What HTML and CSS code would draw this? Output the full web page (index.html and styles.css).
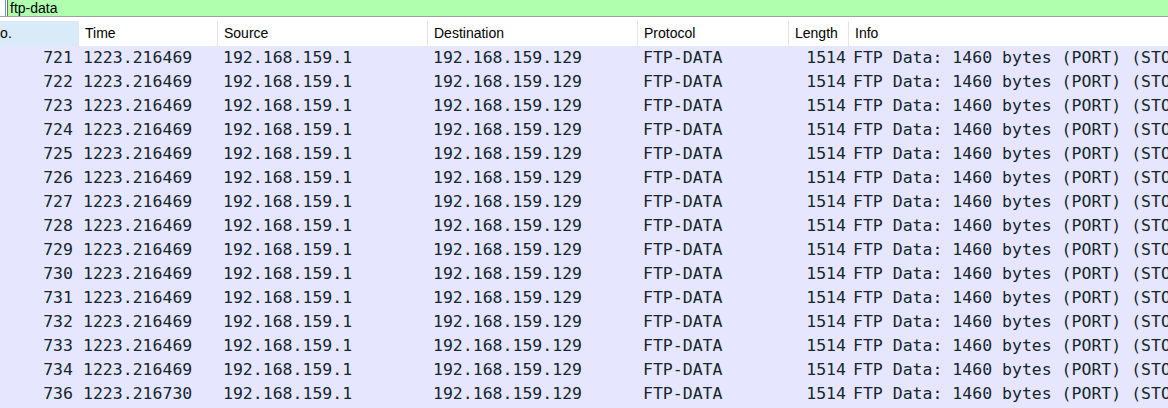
FILE: index.html
```html
<!DOCTYPE html>
<html>
<head>
<meta charset="utf-8">
<link rel="stylesheet" href="styles.css">
</head>
<body>
<div class="filter">
  <div class="bookmark"></div>
  <div class="field">ftp-data</div>
</div>
<div class="gap"></div>
<div class="list">
  <div class="row head">
    <div class="hc sorted">No.</div>
    <div class="hc">Time</div>
    <div class="hc">Source</div>
    <div class="hc">Destination</div>
    <div class="hc">Protocol</div>
    <div class="hc">Length</div>
    <div class="hc last">Info</div>
  </div>
  <div id="rows" class="rows"></div>
</div>
<script>
  var nums = [721,722,723,724,725,726,727,728,729,730,731,732,733,734,736];
  var html = '';
  nums.forEach(function (n) {
    var t = n === 736 ? '1223.216730' : '1223.216469';
    html += '<div class="row data">' +
      '<div class="c num">' + n + '</div>' +
      '<div class="c time">' + t + '</div>' +
      '<div class="c">192.168.159.1</div>' +
      '<div class="c">192.168.159.129</div>' +
      '<div class="c">FTP-DATA</div>' +
      '<div class="c len">1514</div>' +
      '<div class="c info">FTP Data: 1460 bytes (PORT) (STOR file.zip)</div>' +
      '</div>';
  });
  document.getElementById('rows').innerHTML = html;
</script>
</body>
</html>
```

FILE: styles.css
```css
html, body {
  margin: 0;
  padding: 0;
  background: #ffffff;
  width: 1168px;
  height: 408px;
  overflow: hidden;
}

.filter {
  display: flex;
  height: 16px;
  border-bottom: 1px solid #a0a0a0;
  background: #ffffff;
}

.bookmark {
  width: 5px;
  border-right: 1px solid #5b9bd5;
  background: #ffffff;
}

.field {
  flex: 1;
  margin-left: 1px;
  border-left: 1px solid #707070;
  background: #afffaf;
  font-family: "Liberation Sans", Arial, sans-serif;
  font-size: 14px;
  line-height: 16px;
  padding-left: 2px;
  color: #000000;
}

.gap {
  height: 4px;
  background: #ffffff;
}

.list {
  margin-left: -16px;
  width: 1184px;
}

.rows {
  background: #e7e6ff;
  min-height: 370px;
}

.row {
  display: grid;
  grid-template-columns: 95px 139px 210px 210px 151px 60px 1fr;
  white-space: nowrap;
}

.head {
  height: 25px;
  background: #ffffff;
  font-family: "Liberation Sans", Arial, sans-serif;
  font-size: 14px;
  color: #000000;
}

.hc {
  line-height: 25px;
  padding-left: 6px;
  border-right: 1px solid #e5e5e5;
  overflow: hidden;
}

.hc.sorted {
  background: #d9ebf9;
  border-right: none;
  padding-left: 6px;
}

.hc.last {
  border-right: none;
}

.data {
  height: 24px;
  background: #e7e6ff;
  font-family: "DejaVu Sans Mono", monospace;
  font-size: 16.5px;
  color: #12272e;
}

.c {
  line-height: 24px;
  padding-left: 5px;
  overflow: hidden;
}

.c.num {
  text-align: right;
  padding-right: 6px;
}

.c.time {
  padding-left: 4px;
}

.c.len {
  text-align: right;
  padding-right: 3px;
}

.c.info {
  padding-left: 4px;
  overflow: visible;
}
```
